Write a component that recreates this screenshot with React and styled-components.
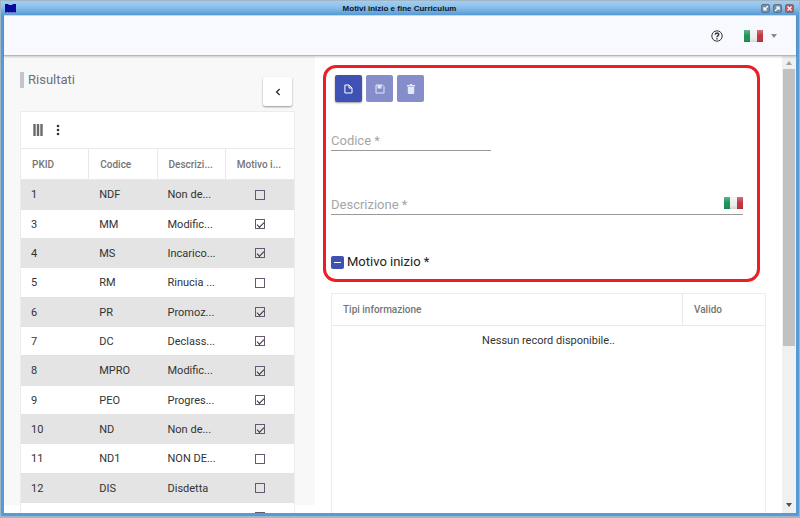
import styled, { createGlobalStyle, css } from "styled-components";

const rows = [
  { id: "1", code: "NDF", desc: "Non de...", start: false },
  { id: "3", code: "MM", desc: "Modific...", start: true },
  { id: "4", code: "MS", desc: "Incarico...", start: true },
  { id: "5", code: "RM", desc: "Rinucia ...", start: false },
  { id: "6", code: "PR", desc: "Promoz...", start: true },
  { id: "7", code: "DC", desc: "Declass...", start: true },
  { id: "8", code: "MPRO", desc: "Modific...", start: true },
  { id: "9", code: "PEO", desc: "Progres...", start: true },
  { id: "10", code: "ND", desc: "Non de...", start: true },
  { id: "11", code: "ND1", desc: "NON DE...", start: false },
  { id: "12", code: "DIS", desc: "Disdetta", start: false },
  { id: "", code: "", desc: "", start: true },
];

const GlobalStyle = createGlobalStyle`
  * {
    box-sizing: border-box;
  }
  body {
    margin: 0;
    font-family: Roboto, sans-serif;
    font-size: 11px;
    color: #333;
  }
  button, input {
    font-family: inherit;
    padding: 0;
    margin: 0;
  }
`;

const Window = styled.div`
  height: 100vh;
  display: flex;
  flex-direction: column;
  overflow: hidden;
  border: solid #9fb6c8;
  border-width: 1px 1px 2px 1px;
  background-color: #579bd6;
`;

const TitleBar = styled.div`
  flex: none;
  height: 14px;
  display: grid;
  grid-template-columns: 1fr auto 1fr;
  align-items: center;
  padding: 0 5px 0 4px;
  background: linear-gradient(#a4cdf0, #8cc0eb 45%, #549ad6);
  > h1 {
    margin: 0;
    padding-top: 1px;
    font: bold 8px/12px "Liberation Sans", sans-serif;
    color: #0c1622;
  }
  > div.actions {
    display: flex;
    justify-content: flex-end;
    gap: 3px;
  }
`;

const WindowButton = styled.button`
  width: 9px;
  height: 9px;
  display: flex;
  border: 1px solid #5e7488;
  border-radius: 2px;
  color: white;
  background-color: ${(props) => (props.$close ? "#b9575a" : "#7590a8")};
`;

const Content = styled.div`
  flex: 1;
  min-height: 0;
  display: flex;
  flex-direction: column;
  margin: 0 3px 3px;
  border-top: 1px solid #c7dcef;
  background-color: white;
`;

const Header = styled.header`
  flex: none;
  height: 40px;
  display: flex;
  align-items: center;
  justify-content: flex-end;
  gap: 21px;
  padding-right: 19px;
  background-color: #f8f9ff;
  border-bottom: 1px solid #b8b8bc;
  box-shadow: 0 1px 2px rgba(0, 0, 0, 0.2);
  z-index: 1;
`;

const PlainButton = styled.button`
  display: flex;
  align-items: center;
  gap: 8px;
  border: none;
  background: none;
  color: #333;
`;

const Main = styled.main`
  flex: 1;
  min-height: 0;
  display: flex;
`;

const Results = styled.section`
  width: 39%;
  min-width: 311px;
  overflow: hidden;
  padding: 16px 20px 0 16px;
  background: linear-gradient(#f8f8f8, #f8f8f8) 0 0 / 100% calc(100% - 8px) no-repeat;
`;

const ResultsTop = styled.div`
  height: 39px;
  display: flex;
  justify-content: space-between;
  > h2 {
    height: 16px;
    margin: 0;
    padding-left: 4px;
    border-left: 4px solid #c2c7cb;
    font-size: 13px;
    line-height: 16px;
    font-weight: 400;
    color: #6b7280;
  }
`;

const CollapseButton = styled.button`
  width: 29px;
  height: 29px;
  display: flex;
  align-items: center;
  justify-content: center;
  margin: 5px 3px 0 0;
  border: none;
  border-radius: 2px;
  background-color: white;
  color: #333;
  box-shadow: 0 1px 2px rgba(0, 0, 0, 0.4);
`;

const Grid = styled.div`
  border: 1px solid #ececec;
  background-color: white;
`;

const GridTools = styled.div`
  height: 36px;
  display: flex;
  align-items: center;
  gap: 13px;
  padding-left: 12px;
`;

const tableBase = css`
  width: 100%;
  table-layout: fixed;
  border-collapse: separate;
  border-spacing: 0;
  th {
    height: 32px;
    padding: 0 0 0 11px;
    border: solid #e9e9e9;
    border-width: 1px 1px 1px 0;
    font-size: 10px;
    font-weight: 500;
    text-align: left;
    color: #757575;
  }
  th:last-child {
    border-right: none;
  }
`;

const ResultsTable = styled.table`
  ${tableBase}
  td {
    height: 29px;
    padding: 0 0 0 10px;
    border-bottom: 1px solid #e2e2e2;
    white-space: nowrap;
  }
  td:last-child {
    padding: 0;
  }
  tbody tr:nth-child(3n + 1) td {
    height: 30px;
  }
  tbody tr:nth-child(odd) {
    background-color: #e4e4e4;
  }
`;

const RowCheck = styled.input`
  appearance: none;
  width: 10px;
  height: 10px;
  display: block;
  margin: 0 auto;
  border: 1px solid #665870;
  &:checked::after {
    content: "";
    display: block;
    width: 6px;
    height: 3px;
    margin: 2px 1px;
    border: solid #333;
    border-width: 0 0 1px 1px;
    transform: rotate(-45deg);
  }
`;

const Detail = styled.section`
  flex: 1;
  min-width: 0;
  overflow: hidden;
  padding: 9px 16px 0 8px;
`;

const Form = styled.form`
  height: 217px;
  display: flex;
  flex-direction: column;
  margin-right: 6px;
  padding: 7px 14px 0 5px;
  border: 3px solid #ee1c25;
  border-radius: 13px;
`;

const Toolbar = styled.div`
  display: flex;
  gap: 4px;
  padding-left: 4px;
`;

const ToolButton = styled.button`
  width: 27px;
  height: 27px;
  display: flex;
  align-items: center;
  justify-content: center;
  border: none;
  border-radius: 2px;
  background-color: #3f51b5;
  color: white;
  box-shadow: 0 1px 2px rgba(0, 0, 0, 0.4);
  &:disabled {
    background-color: #858ecb;
    color: #e4e7f6;
    box-shadow: none;
  }
`;

// the label sits over the empty input
const Field = styled.div`
  width: ${(props) => props.$width};
  height: 24px;
  display: grid;
  grid-template-columns: 1fr auto;
  align-items: center;
  margin-top: ${(props) => props.$top};
  border-bottom: 1px solid #999;
  > label {
    grid-area: 1 / 1;
    padding-top: 4px;
    font-size: 13px;
    color: #a6a6a6;
  }
  > input {
    grid-area: 1 / 1;
    width: 100%;
    height: 20px;
    border: none;
    outline: none;
    background: none;
  }
`;

const CheckField = styled.div`
  display: flex;
  align-items: center;
  gap: 3px;
  margin-top: 39px;
  font-size: 13px;
  line-height: 16px;
  color: #222;
  > input {
    appearance: none;
    width: 13px;
    height: 13px;
    border-radius: 2px;
    background-color: #3f51b5;
  }
  > input::after {
    content: "";
    display: block;
    width: 7px;
    height: 1px;
    margin: 6px 3px;
    background-color: white;
  }
`;

const InfoGrid = styled(Grid)`
  margin: 11px 0 0 8px;
  > p {
    height: 187px;
    margin: 0;
    padding-top: 7px;
    line-height: 16px;
    text-align: center;
  }
`;

const InfoTable = styled.table`
  ${tableBase}
  th {
    border-top: none;
  }
  th:last-child {
    width: 82px;
  }
`;

const Scrollbar = styled.div`
  flex: none;
  width: 14px;
  display: flex;
  flex-direction: column;
  align-items: center;
  justify-content: space-between;
  padding: 5px 1px 6px;
  background-color: #f0f0f0;
  > div.thumb {
    width: 100%;
    height: 62%;
    margin: 4px 0 auto;
    background-color: #c1c1c1;
  }
`;

const Triangle = ({ up, color }) => (
  <svg width="6" height="4" viewBox="0 0 6 4">
    <path d={up ? "M0 4 3 0 6 4Z" : "M0 0H6L3 4Z"} fill={color} />
  </svg>
);

const Flag = () => (
  <svg width="19" height="12" viewBox="0 0 19 12">
    <defs>
      <linearGradient id="shine" x2="0" y2="1">
        <stop offset="0" stopColor="#fff" stopOpacity=".3" />
        <stop offset=".5" stopColor="#fff" stopOpacity="0" />
        <stop offset="1" stopColor="#000" stopOpacity=".12" />
      </linearGradient>
    </defs>
    <path d="M0 0H6V12H0Z" fill="#1b9456" />
    <path d="M6 0H13V12H6Z" fill="#efefef" />
    <path d="M13 0H19V12H13Z" fill="#c0353f" />
    <path d="M0 0H19V12H0Z" fill="url(#shine)" />
  </svg>
);

const AppIcon = () => (
  <svg width="11" height="11" viewBox="0 0 11 11">
    <path d="M0 1H3L4 2H7L8 1H11V9H0Z" fill="#0a0a9c" />
    <path d="M0 9.5H11" stroke="#6a63b8" strokeDasharray="2 1" />
  </svg>
);

const ArrowIcon = ({ d }) => (
  <svg width="7" height="7" viewBox="0 0 7 7" fill="none" stroke="currentColor" strokeWidth="1.2">
    <path d={d} />
  </svg>
);

const HelpIcon = () => (
  <svg width="12" height="12" viewBox="0 0 12 12" fill="none" stroke="currentColor">
    <circle cx="6" cy="6" r="5.2" strokeWidth="1" />
    <path d="M4.3 4.8C4.3 2.4 7.7 2.5 7.7 4.6 7.7 5.8 6 5.8 6 7.3M6 8.3V9.5" strokeWidth="1.5" />
  </svg>
);

export default function App() {
  return (
    <Window>
      <GlobalStyle />
      <TitleBar>
        <AppIcon />
        <h1>Motivi inizio e fine Curriculum</h1>
        <div className="actions">
          <WindowButton aria-label="Riduci">
            <ArrowIcon d="M6 1 2 5M2 2V5H5" />
          </WindowButton>
          <WindowButton aria-label="Ingrandisci">
            <ArrowIcon d="M1 6 5 2M2 2H5V5" />
          </WindowButton>
          <WindowButton $close aria-label="Chiudi">
            <ArrowIcon d="M1.5 1.5 5.5 5.5M5.5 1.5 1.5 5.5" />
          </WindowButton>
        </div>
      </TitleBar>
      <Content>
        <Header>
          <PlainButton aria-label="Aiuto">
            <HelpIcon />
          </PlainButton>
          <PlainButton aria-label="Lingua">
            <Flag />
            <Triangle color="#8a8a8a" />
          </PlainButton>
        </Header>
        <Main>
          <Results>
            <ResultsTop>
              <h2>Risultati</h2>
              <CollapseButton aria-label="Comprimi">
                <svg width="6" height="8" viewBox="0 0 6 8" fill="none" stroke="currentColor" strokeWidth="1.4">
                  <path d="M4.6 1 1.6 4 4.6 7" />
                </svg>
              </CollapseButton>
            </ResultsTop>
            <Grid>
              <GridTools>
                <PlainButton aria-label="Colonne">
                  <svg width="10" height="12" viewBox="0 0 10 12" stroke="#6a6a6a" strokeWidth="2.4">
                    <path d="M1.5 0V12M5 0V12M8.5 0V12" />
                  </svg>
                </PlainButton>
                <PlainButton aria-label="Altro">
                  <svg width="4" height="12" viewBox="0 0 4 12" fill="#333">
                    <circle cx="2" cy="2" r="1.3" />
                    <circle cx="2" cy="6" r="1.3" />
                    <circle cx="2" cy="10" r="1.3" />
                  </svg>
                </PlainButton>
              </GridTools>
              <ResultsTable>
                <thead>
                  <tr>
                    <th>PKID</th>
                    <th>Codice</th>
                    <th>Descrizi...</th>
                    <th>Motivo i...</th>
                  </tr>
                </thead>
                <tbody>
                  {rows.map((row, i) => (
                    <tr key={i}>
                      <td>{row.id}</td>
                      <td>{row.code}</td>
                      <td>{row.desc}</td>
                      <td>
                        <RowCheck type="checkbox" aria-label="Motivo inizio" defaultChecked={row.start} />
                      </td>
                    </tr>
                  ))}
                </tbody>
              </ResultsTable>
            </Grid>
          </Results>
          <Detail>
            <Form>
              <Toolbar>
                <ToolButton type="button" aria-label="Nuovo">
                  <svg width="9" height="10" viewBox="0 0 9 10" fill="none" stroke="currentColor">
                    <path d="M.9 1H5L8 4V9H.9ZM5 1V4H8" />
                  </svg>
                </ToolButton>
                <ToolButton type="button" aria-label="Salva" disabled>
                  <svg width="10" height="10" viewBox="0 0 10 10" fill="none" stroke="currentColor">
                    <path d="M1 1H7.5L9 2.5V9H1Z" />
                    <path d="M2.5 1H6.5V4.5H2.5Z" fill="currentColor" stroke="none" />
                  </svg>
                </ToolButton>
                <ToolButton type="button" aria-label="Elimina" disabled>
                  <svg width="8" height="10" viewBox="0 0 8 10" fill="currentColor">
                    <path d="M0 1H2.5L3 0H5L5.5 1H8V2.5H0ZM.8 3H7.2V9Q7.2 10 6.2 10H1.8Q.8 10 .8 9Z" />
                  </svg>
                </ToolButton>
              </Toolbar>
              <Field $width="160px" $top="25px">
                <label htmlFor="code">Codice *</label>
                <input id="code" type="text" />
              </Field>
              <Field $width="100%" $top="40px">
                <label htmlFor="description">Descrizione *</label>
                <input id="description" type="text" />
                <Flag />
              </Field>
              <CheckField>
                <input id="start" type="checkbox" />
                <label htmlFor="start">Motivo inizio *</label>
              </CheckField>
            </Form>
            <InfoGrid>
              <InfoTable>
                <thead>
                  <tr>
                    <th>Tipi informazione</th>
                    <th>Valido</th>
                  </tr>
                </thead>
              </InfoTable>
              <p>Nessun record disponibile..</p>
            </InfoGrid>
          </Detail>
          <Scrollbar>
            <Triangle up color="#a0a0a0" />
            <div className="thumb" />
            <Triangle color="#505050" />
          </Scrollbar>
        </Main>
      </Content>
    </Window>
  );
}
